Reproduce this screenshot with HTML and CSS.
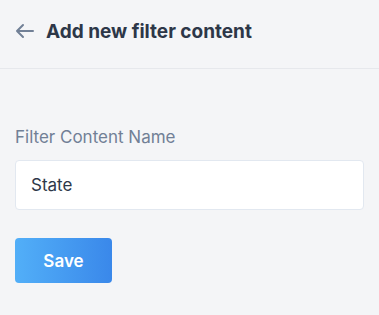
FILE: index.html
```html
<!DOCTYPE html>
<html lang="en">
<head>
  <meta charset="UTF-8">
  <title>Add new filter content</title>
  <link rel="stylesheet" href="styles.css">
</head>
<body>
  <div class="header">
    <a href="#" class="back">
      <svg width="20" height="16" viewBox="0 0 20 16" fill="none" stroke="#718096" stroke-width="2" stroke-linecap="round" stroke-linejoin="round">
        <path d="M18 8H2M8 2L2 8l6 6"/>
      </svg>
    </a>
    <h1>Add new filter content</h1>
  </div>

  <form class="content">
    <label for="name">Filter Content Name</label>
    <input id="name" type="text" value="State">
    <button type="submit" class="save">Save</button>
  </form>
</body>
</html>
```

FILE: styles.css
```css
body {
  font-family: Inter, "Noto Sans", sans-serif;
  margin: 0;
  background-color: #f4f5f7;
  color: #2d3748;
}
.header {
  display: flex;
  align-items: center;
  height: 62px;
  padding: 0 15px 6px;
  border-bottom: 1px solid #e6e8ec;
}
.back {
  display: flex;
  margin-right: 11px;
}
.header h1 {
  margin: 0;
  font-size: 19px;
  font-weight: 700;
  color: #2d3748;
}
.content {
  display: flex;
  flex-direction: column;
  align-items: flex-start;
  padding: 58px 15px 0;
}
label {
  font-size: 17px;
  color: #718096;
  margin-bottom: 13px;
}
input {
  box-sizing: border-box;
  width: 100%;
  height: 50px;
  padding: 0 15px;
  border: 1px solid #e2e8f0;
  border-radius: 4px;
  background: #fff;
  font-family: inherit;
  font-size: 17px;
  color: #2d3748;
  margin-bottom: 28px;
}
.save {
  width: 97px;
  height: 45px;
  border: none;
  border-radius: 4px;
  background: linear-gradient(90deg, #52aff8, #3a88ea);
  color: #fff;
  font-family: inherit;
  font-size: 17px;
  font-weight: 600;
}
```
